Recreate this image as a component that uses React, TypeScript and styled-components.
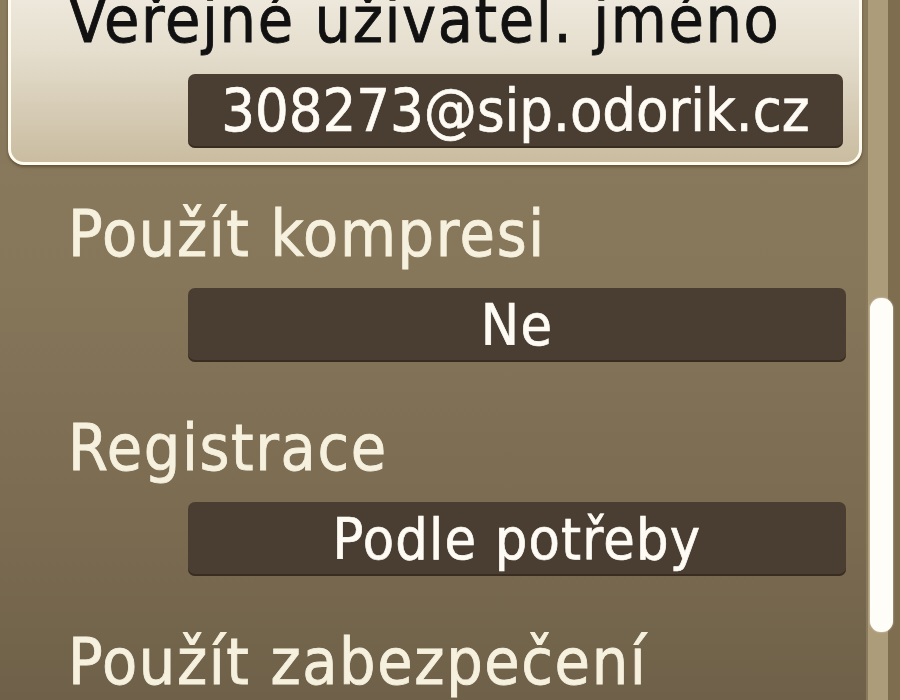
import React from "react";
import styled, { createGlobalStyle } from "styled-components";

const GlobalStyle = createGlobalStyle`
  html, body {
    margin: 0;
    padding: 0;
    background: #7f6f53;
  }
`;

const Screen = styled.div`
  width: 900px;
  height: 700px;
  overflow: hidden;
  display: flex;
  font-family: "DejaVu Sans Condensed", "DejaVu Sans", sans-serif;
  background: linear-gradient(
    180deg,
    #8c7c5e 0%,
    #86765a 40%,
    #7a6b51 75%,
    #6f6149 100%
  );
`;

const List = styled.div`
  flex: 1;
  margin-top: -49px;
  padding-left: 8px;
  padding-right: 4px;
`;

const Item = styled.div<{ $active?: boolean }>`
  box-sizing: border-box;
  height: 214px;
  padding: 31px 16px 17px 60px;
  display: flex;
  flex-direction: column;
  border-radius: 16px;
  ${(p) =>
    p.$active
      ? `
    border: 3px solid #fffbee;
    padding: 28px 16px 12px 57px;
    background: linear-gradient(180deg, #f4f1e8 0%, #e6dfcf 45%, #c9bca0 100%);
    box-shadow: 0 2px 3px rgba(60, 45, 25, 0.5);
  `
      : ""}
`;

const Label = styled.div<{ $active?: boolean }>`
  font-size: 64px;
  line-height: 77px;
  height: 77px;
  letter-spacing: 1.6px;
  white-space: nowrap;
  color: ${(p) => (p.$active ? "#111" : "#f6f1de")};
  -webkit-text-stroke: 0.8px ${(p) => (p.$active ? "#111" : "#f6f1de")};
`;

const ValueBox = styled.div<{ $size?: number; $spacing?: number }>`
  margin-top: 15px;
  margin-left: 120px;
  height: 74px;
  line-height: 74px;
  border-radius: 7px;
  background: #4a3e33;
  box-shadow: inset 0 -2px 0 rgba(40, 28, 18, 0.5);
  color: #fdfbf4;
  -webkit-text-stroke: 0.7px #fdfbf4;
  text-align: center;
  white-space: nowrap;
  font-size: ${(p) => p.$size ?? 57}px;
  letter-spacing: ${(p) => p.$spacing ?? 1.2}px;
`;

const ScrollColumn = styled.div`
  width: 34px;
  display: flex;
  background: linear-gradient(90deg, #8a7a5c 0 2px, #ad9c7a 2px 22px, #7f6d50 22px);
`;

const Thumb = styled.div`
  margin-top: 298px;
  margin-left: 4px;
  width: 23px;
  height: 334px;
  border-radius: 11px;
  background: #fffdf8;
  box-shadow: 0 0 2px rgba(255, 255, 255, 0.7);
`;

const items = [
  {
    label: "Veřejné uživatel. jméno",
    value: "308273@sip.odorik.cz",
    active: true,
    size: 59,
    spacing: 0,
  },
  { label: "Použít kompresi", value: "Ne" },
  { label: "Registrace", value: "Podle potřeby" },
  { label: "Použít zabezpečení", value: "Ne" },
];

const App = () => {
  return (
    <>
      <GlobalStyle />
      <Screen>
        <List>
          {items.map((item, index) => (
            <Item key={index} $active={item.active}>
              <Label $active={item.active}>{item.label}</Label>
              <ValueBox $size={item.size} $spacing={item.spacing}>
                {item.value}
              </ValueBox>
            </Item>
          ))}
        </List>
        <ScrollColumn>
          <Thumb />
        </ScrollColumn>
      </Screen>
    </>
  );
};

export default App;
